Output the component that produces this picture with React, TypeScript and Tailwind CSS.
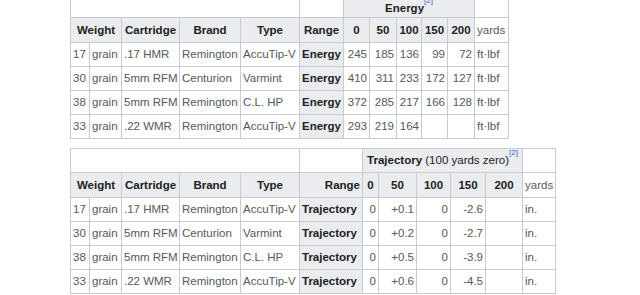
import React from 'react';

type Row = { w: string; cart: string; brand: string; type: string; vals: string[]; };

const energyRows: Row[] = [
  { w: '17', cart: '.17 HMR', brand: 'Remington', type: 'AccuTip-V', vals: ['245', '185', '136', '99', '72'] },
  { w: '30', cart: '5mm RFM', brand: 'Centurion', type: 'Varmint', vals: ['410', '311', '233', '172', '127'] },
  { w: '38', cart: '5mm RFM', brand: 'Remington', type: 'C.L. HP', vals: ['372', '285', '217', '166', '128'] },
  { w: '33', cart: '.22 WMR', brand: 'Remington', type: 'AccuTip-V', vals: ['293', '219', '164', '', ''] },
];

const trajRows: Row[] = [
  { w: '17', cart: '.17 HMR', brand: 'Remington', type: 'AccuTip-V', vals: ['0', '+0.1', '0', '-2.6', ''] },
  { w: '30', cart: '5mm RFM', brand: 'Centurion', type: 'Varmint', vals: ['0', '+0.2', '0', '-2.7', ''] },
  { w: '38', cart: '5mm RFM', brand: 'Remington', type: 'C.L. HP', vals: ['0', '+0.5', '0', '-3.9', ''] },
  { w: '33', cart: '.22 WMR', brand: 'Remington', type: 'AccuTip-V', vals: ['0', '+0.6', '0', '-4.5', ''] },
];

const th = 'border border-[#c8ccd1] bg-[#eaecf0] text-[#202122] font-bold px-[2px] py-0 whitespace-nowrap overflow-visible';
const td = 'border border-[#c8ccd1] bg-white text-[#54595d] px-[2px] py-0 whitespace-nowrap overflow-visible';

// footnote marker
const Ref = () => (
  <sup className="text-[8px] font-normal text-[#3366cc] align-[5px] leading-none">[2]</sup>
);

function DataTable({
  cols,
  title,
  titleClass,
  rangeAlign,
  label,
  unit,
  rows,
}: {
  cols: number[];
  title: React.ReactNode;
  titleClass: string;
  rangeAlign: string;
  label: string;
  unit: string;
  rows: Row[];
}) {
  const total = cols.reduce((a, b) => a + b, 0);
  return (
    <table className="table-fixed border-collapse" style={{ width: total }}>
      <colgroup>
        {cols.map((c, i) => (
          <col key={i} style={{ width: c }} />
        ))}
      </colgroup>
      <tbody>
        <tr className="h-[24px]">
          <td colSpan={5} className={td}></td>
          <td className={td}></td>
          <th colSpan={5} className={`${th} text-center ${titleClass}`}>{title}</th>
          <td className={td}></td>
        </tr>
        <tr className="h-[25px]">
          <th colSpan={2} className={`${th} text-center`}>Weight</th>
          <th className={`${th} text-center`}>Cartridge</th>
          <th className={`${th} text-center`}>Brand</th>
          <th className={`${th} text-center`}>Type</th>
          <th className={`${th} ${rangeAlign}`}>Range</th>
          {['0', '50', '100', '150', '200'].map((r) => (
            <th key={r} className={`${th} text-center`}>{r}</th>
          ))}
          <td className={td}>yards</td>
        </tr>
        {rows.map((r) => (
          <tr key={r.w} className="h-[24px]">
            <td className={td}>{r.w}</td>
            <td className={td}>grain</td>
            <td className={td}>{r.cart}</td>
            <td className={td}>{r.brand}</td>
            <td className={td}>{r.type}</td>
            <th className={`${th} text-left`}>{label}</th>
            {r.vals.map((v, i) => (
              <td key={i} className={`${td} text-right`}>{v}</td>
            ))}
            <td className={td}>{unit}</td>
          </tr>
        ))}
      </tbody>
    </table>
  );
}

export default function App() {
  return (
    <div className="w-[640px] h-[295px] overflow-hidden bg-white text-[11.5px] leading-[15px] font-['Liberation_Sans',Arial,sans-serif]">
      <div className="pl-[70px] -mt-[7px] flex flex-col gap-[9px]">
        <DataTable
          cols={[19, 32, 58, 61, 59, 44, 26, 27, 25, 26, 27, 34]}
          title={<>Energy<Ref /></>}
          titleClass="pt-[6px]"
          rangeAlign="text-center"
          label="Energy"
          unit="ft·lbf"
          rows={energyRows}
        />
        <DataTable
          cols={[19, 32, 58, 61, 59, 63, 16, 38, 34, 35, 37, 33]}
          title={<>Trajectory <span className="font-normal">(100 yards zero)</span><Ref /></>}
          titleClass=""
          rangeAlign="text-right"
          label="Trajectory"
          unit="in."
          rows={trajRows}
        />
      </div>
    </div>
  );
}
